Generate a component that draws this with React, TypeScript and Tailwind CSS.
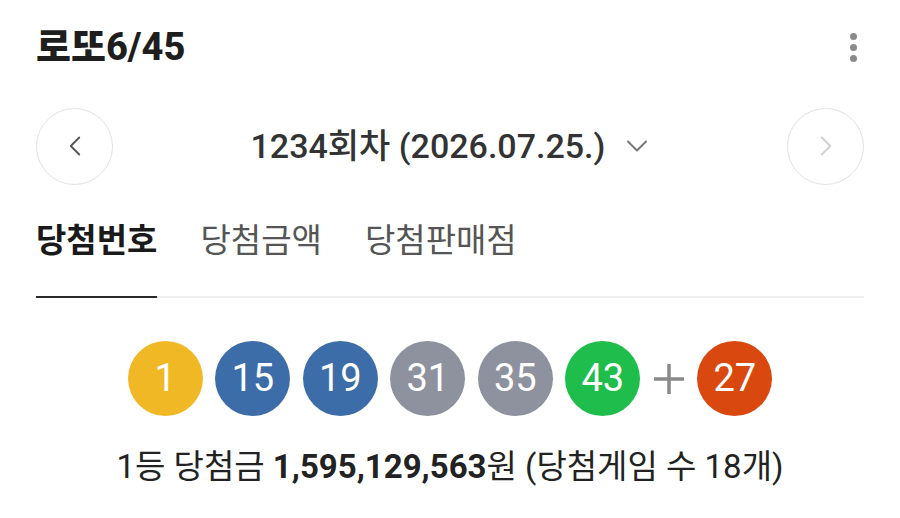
import { ChevronLeft, ChevronRight, ChevronDown } from "lucide-react";

const font = { fontFamily: "Roboto, 'Noto Sans CJK KR', sans-serif" };

const balls = [
  { n: 1, c: "bg-[#f1b826]" },
  { n: 15, c: "bg-[#3d6da8]" },
  { n: 19, c: "bg-[#3d6da8]" },
  { n: 31, c: "bg-[#8e929e]" },
  { n: 35, c: "bg-[#8e929e]" },
  { n: 43, c: "bg-[#1fbd4c]" },
];

function Ball({ n, c }: { n: number; c: string }) {
  return (
    <div
      className={`flex h-[75px] w-[75px] items-center justify-center rounded-full text-[38px] font-normal text-white ${c}`}
    >
      {n}
    </div>
  );
}

export default function App() {
  return (
    <div className="h-[518px] w-[900px] bg-white" style={font}>
      <div className="flex h-[94px] items-center justify-between pl-[36px] pr-[43px]">
        <h1 className="text-[38px] font-extrabold text-[#1e1e1e]">로또6/45</h1>
        <div className="flex flex-col gap-[4px]">
          <span className="h-[7px] w-[7px] rounded-full bg-[#8a8a8a]" />
          <span className="h-[7px] w-[7px] rounded-full bg-[#8a8a8a]" />
          <span className="h-[7px] w-[7px] rounded-full bg-[#8a8a8a]" />
        </div>
      </div>

      <div className="flex h-[104px] items-center justify-between px-[36px]">
        <button className="flex h-[77px] w-[77px] items-center justify-center rounded-full border border-[#e2e2e2]">
          <ChevronLeft size={34} strokeWidth={1.3} className="text-[#555]" />
        </button>
        <div className="flex items-center gap-[14px] pl-[6px]">
          <span className="text-[34px] font-medium text-[#333]">
            1234회차 (2026.07.25.)
          </span>
          <ChevronDown size={36} strokeWidth={1.3} className="text-[#777]" />
        </div>
        <button className="flex h-[77px] w-[77px] items-center justify-center rounded-full border border-[#e2e2e2]">
          <ChevronRight size={34} strokeWidth={1.3} className="text-[#cfcfcf]" />
        </button>
      </div>

      <div className="px-[36px]">
        <div className="flex h-[98px] items-start gap-[43px] pt-[18px] text-[33px]">
          <span className="font-bold text-[#1a1a1a]">당첨번호</span>
          <span className="text-[#555]">당첨금액</span>
          <span className="text-[#555]">당첨판매점</span>
        </div>
        <div className="h-[2px] bg-[#eeeeee]">
          <div className="h-[2px] w-[121px] bg-[#2a2a2a]" />
        </div>
      </div>

      <div className="mt-[43px] flex items-center justify-center gap-[12.5px]">
        {balls.map((b) => (
          <Ball key={b.n} n={b.n} c={b.c} />
        ))}
        <svg width="32" height="32" viewBox="0 0 32 32" className="text-[#8a8a8a]">
          <path d="M16 1v30M1 16h30" stroke="currentColor" strokeWidth="3.5" />
        </svg>
        <Ball n={27} c="bg-[#d9490f]" />
      </div>

      <div className="mt-[26px] text-center text-[33px] text-[#222]">
        1등 당첨금 <span className="font-bold">1,595,129,563</span>원 (당첨게임 수 18개)
      </div>
    </div>
  );
}
